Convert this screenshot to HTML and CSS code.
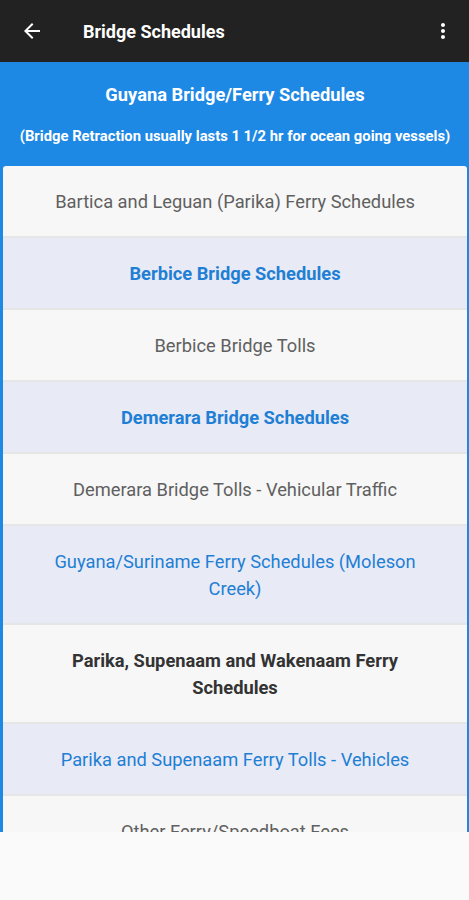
FILE: index.html
```html
<!DOCTYPE html>
<html><head>
<title>Bridge Schedules</title>
<link rel="stylesheet" href="styles.css">
</head><body>
<div class="toolbar">
<svg class="back" width="24" height="24" viewBox="0 0 24 24"><path d="M20 11H7.83l5.59-5.59L12 4l-8 8 8 8 1.41-1.41L7.83 13H20v-2z" fill="#fff"/></svg>
<span class="title">Bridge Schedules</span>
<svg class="more" width="24" height="24" viewBox="0 0 24 24"><path d="M12 8c1.1 0 2-.9 2-2s-.9-2-2-2-2 .9-2 2 .9 2 2 2zm0 2c-1.1 0-2 .9-2 2s.9 2 2 2 2-.9 2-2-.9-2-2-2zm0 6c-1.1 0-2 .9-2 2s.9 2 2 2 2-.9 2-2-.9-2-2-2z" fill="#fff"/></svg>
</div>
<div class="content">
<div class="banner">
<h3>Guyana Bridge/Ferry Schedules</h3>
<p>(Bridge Retraction usually lasts 1 1/2 hr for ocean going vessels)</p>
</div>
<ul class="list">
<li class="plain">Bartica and Leguan (Parika) Ferry Schedules</li>
<li class="alt link bold">Berbice Bridge Schedules</li>
<li class="plain">Berbice Bridge Tolls</li>
<li class="alt link bold">Demerara Bridge Schedules</li>
<li class="plain">Demerara Bridge Tolls - Vehicular Traffic</li>
<li class="alt link tall">Guyana/Suriname Ferry Schedules (Moleson Creek)</li>
<li class="plain dark bold tall">Parika, Supenaam and Wakenaam Ferry Schedules</li>
<li class="alt link">Parika and Supenaam Ferry Tolls - Vehicles</li>
<li class="plain">Other Ferry/Speedboat Fees</li>
</ul>
</div>
<div class="navspace"></div>
</body></html>
```

FILE: styles.css
```css
body {margin: 0; background-color: #fafafa; font-family: Roboto, "Liberation Sans", sans-serif; width: 469px; overflow: hidden;}
.toolbar {height: 62px; background-color: #222; display: flex; align-items: center; padding: 0 14px 0 20px; box-sizing: border-box;}
.back {width: 24px; height: 24px;}
.title {color: #fff; font-size: 18px; font-weight: bold; margin-left: 39px; flex: 1;}
.more {width: 24px; height: 24px;}
.content {height: 770px; overflow: hidden; background-color: #1e88e5; padding: 0 2px 0 3px;}
.banner {height: 104px; color: #fff; text-align: center; display: flex; flex-direction: column; align-items: center; padding-top: 22px; box-sizing: border-box;}
.banner h3 {margin: 0; font-size: 18.3px; font-weight: bold;}
.banner p {margin: 22px 0 0; font-size: 14.8px; font-weight: bold; white-space: nowrap;}
.list {list-style: none; margin: 0; padding: 0; background-color: #f7f7f7; border-radius: 3px 3px 0 0; overflow: hidden;}
.list li {height: 70px; display: flex; align-items: center; justify-content: center; text-align: center; padding: 0 40px; font-size: 18.3px; line-height: 27px; color: #606060; border-bottom: 2px solid #e6e6e6;}
.list li.alt {background-color: #e8eaf6;}
.list li.link {color: #1e7fd4;}
.list li.bold {font-weight: bold;}
.list li.dark {color: #333;}
.list li.tall {height: 97px;}
.navspace {position: absolute; left: 0; top: 832px; width: 469px; height: 68px; background-color: #fafafa;}
```
